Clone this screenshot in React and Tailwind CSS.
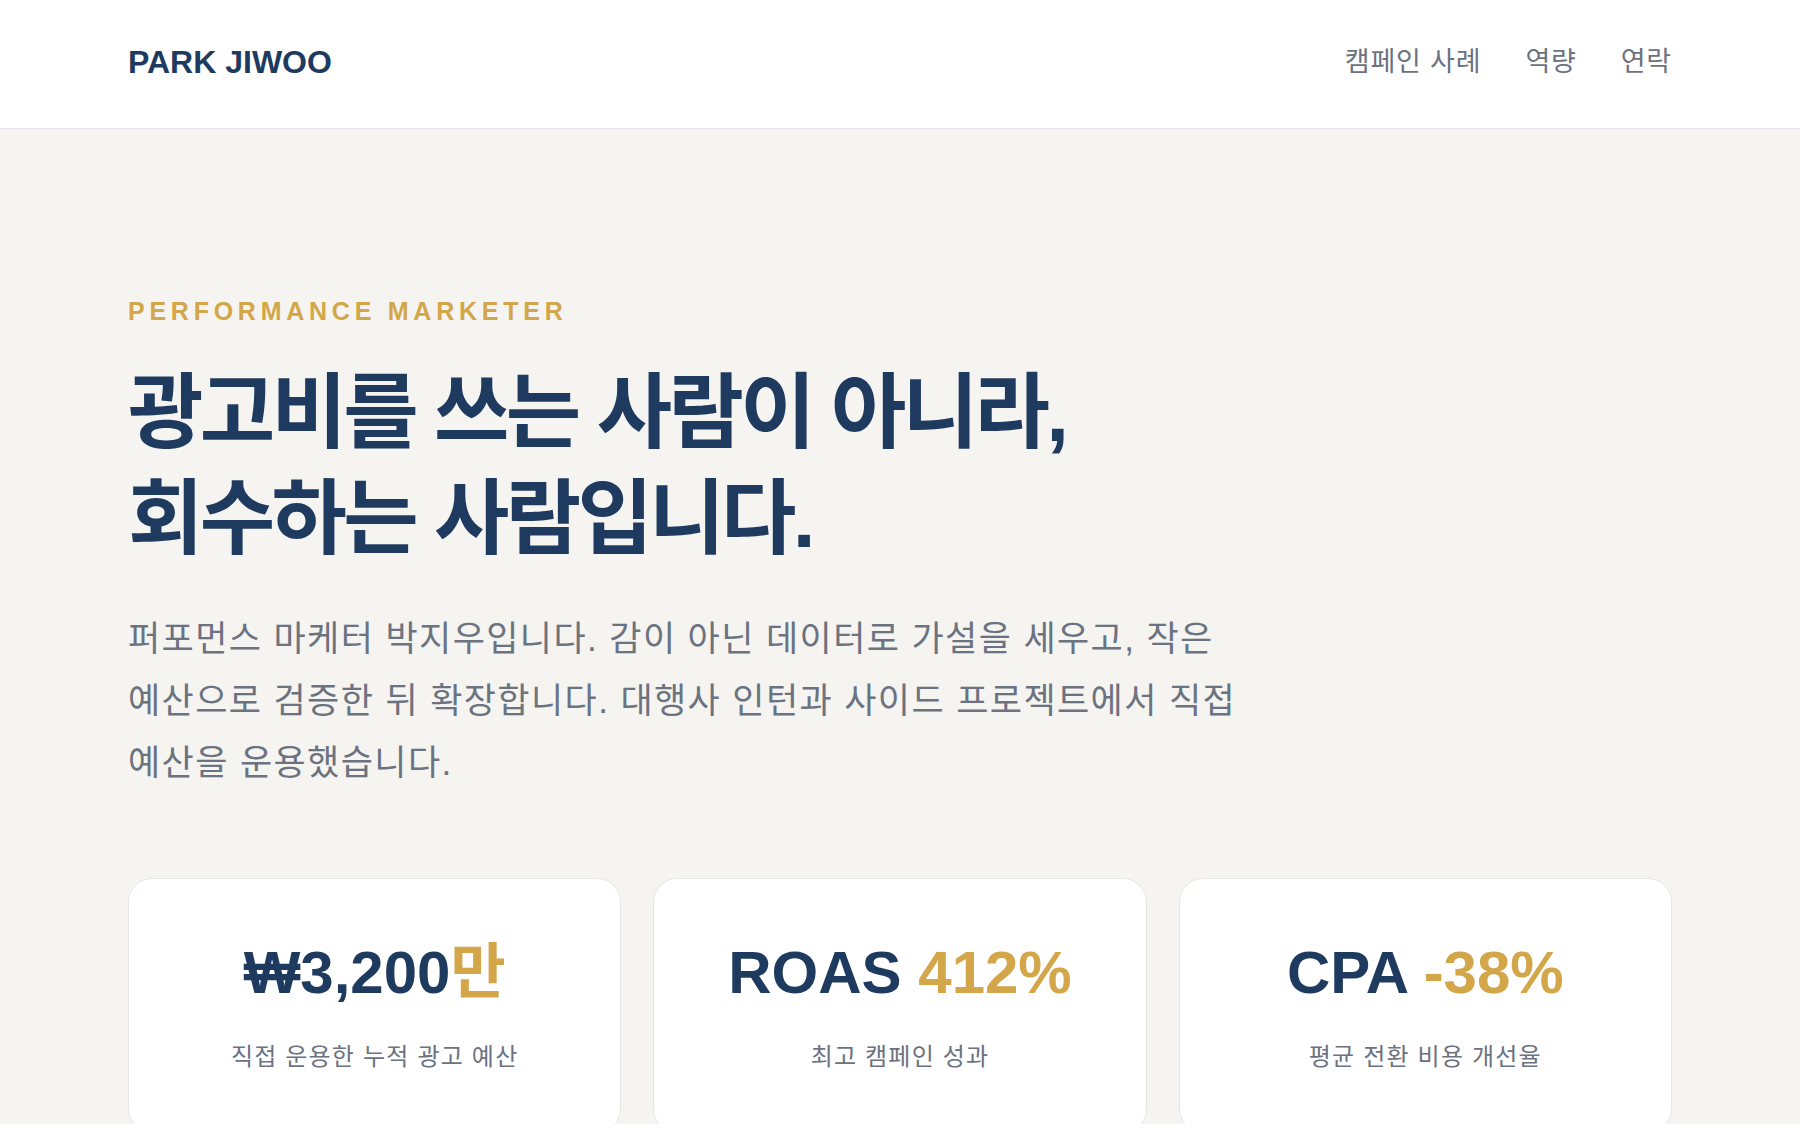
import React from 'react';

const NAV = ['캠페인 사례', '역량', '연락'];

const STATS = [
    {main: '₩3,200', accent: '만', label: '직접 운용한 누적 광고 예산'},
    {main: 'ROAS ', accent: '412%', label: '최고 캠페인 성과'},
    {main: 'CPA ', accent: '-38%', label: '평균 전환 비용 개선율'},
];

export default function App() {
    return (
        <div
            className="min-h-screen bg-[#f5f4f1] break-keep"
            style={{fontFamily: '"Liberation Sans", "Noto Sans CJK KR", sans-serif'}}
        >
            {/* Header */}
            <header className="h-[129px] bg-white border-b border-[#e5e6ea] px-32 pb-1 flex items-center justify-between">
                <div className="text-[32px] font-bold text-[#1e3a5f]">PARK JIWOO</div>
                <nav className="flex items-center gap-11">
                    {NAV.map((item) => (
                        <a key={item} href="#" className="text-[27px] tracking-[0.03em] text-[#6b7280]">
                            {item}
                        </a>
                    ))}
                </nav>
            </header>

            {/* Hero */}
            <section className="px-32 pt-[163px] pb-16">
                <p className="text-[25px] leading-[38px] font-bold tracking-[0.19em] text-[#d4a64a]">
                    PERFORMANCE MARKETER
                </p>
                <h1 className="mt-[30px] text-[82px] leading-[106px] font-bold tracking-[-0.045em] text-[#1e3a5f]">
                    광고비를 쓰는 사람이 아니라,
                    <br />
                    회수하는 사람입니다.
                </h1>
                <p className="mt-9 max-w-[1150px] text-[35px] leading-[62px] tracking-[0.04em] text-[#6b7280]">
                    퍼포먼스 마케터 박지우입니다. 감이 아닌 데이터로 가설을 세우고, 작은 예산으로 검증한 뒤 확장합니다. 대행사 인턴과 사이드 프로젝트에서 직접 예산을 운용했습니다.
                </p>

                {/* Stats */}
                <div className="mt-[84px] grid grid-cols-3 gap-8">
                    {STATS.map((s) => (
                        <div
                            key={s.label}
                            className="bg-white border border-[#e6e6e6] rounded-3xl pt-[58px] pb-[58px] flex flex-col items-center"
                        >
                            <div className="text-[60px] leading-[72px] font-bold text-[#1e3a5f]">
                                {s.main}
                                <span className="text-[#d4a64a]">{s.accent}</span>
                            </div>
                            <div className="mt-[30px] text-[24px] leading-[35px] tracking-[0.05em] text-[#6b7280]">
                                {s.label}
                            </div>
                        </div>
                    ))}
                </div>
            </section>
        </div>
    );
}
